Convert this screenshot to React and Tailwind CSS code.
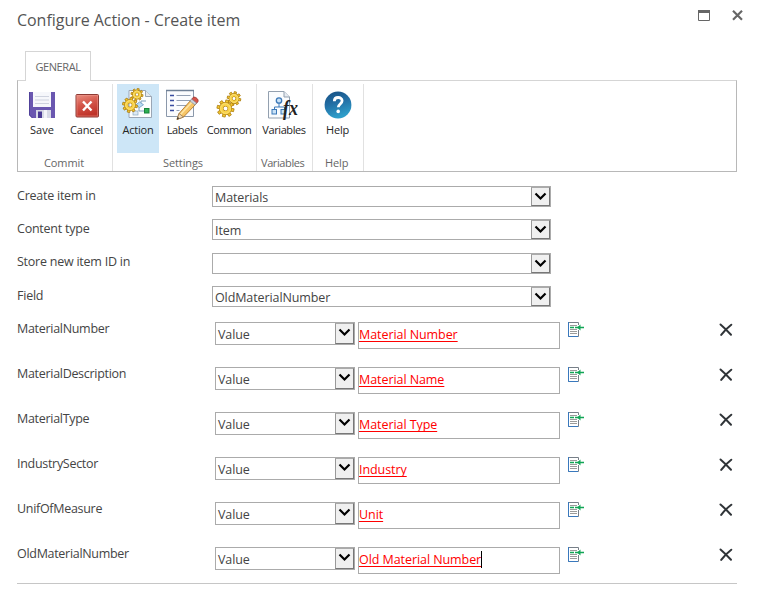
import React from "react";

const GEAR_TEETH = [0, 45, 90, 135, 180, 225, 270, 315];

function Gear({ x, y, r }) {
  return (
    <g transform={`translate(${x} ${y}) rotate(12)`}>
      {GEAR_TEETH.map((a) => (
        <rect key={a} x={-r * 0.17} y={-r} width={r * 0.34} height={r * 0.5} fill="#f5c82e" stroke="#a87709" strokeWidth="0.7" transform={`rotate(${a})`} />
      ))}
      <circle r={r * 0.5} fill="none" stroke="#a87709" strokeWidth={r * 0.4 + 1} />
      <circle r={r * 0.5} fill="none" stroke="#f8d145" strokeWidth={r * 0.4} />
      <circle r={r * 0.57} fill="none" stroke="#fbe58a" strokeWidth="0.6" />
    </g>
  );
}

function SaveIcon() {
  return (
    <svg width="32" height="32" viewBox="0 0 32 32">
      <path d="M3 4h26v26H6l-3-3z" fill="#6a57b0" />
      <path d="M3.500 4v23l3 3" fill="none" stroke="#50419a" strokeWidth="1" />
      <path d="M7 4h18v15H7z" fill="#f6f7fb" />
      <path d="M9 8.500h14M9 12h14M9 15.500h14" stroke="#cfd3df" strokeWidth="1" />
      <path d="M10 22h15v8H10z" fill="#d7d9e6" />
      <path d="M12 23.500h4V30h-4z" fill="#4b3b94" />
      <path d="M18 22h3v8h-3z" fill="#f3f4f9" />
    </svg>
  );
}

function CancelIcon() {
  return (
    <svg width="32" height="32" viewBox="0 0 32 32">
      <defs>
        <linearGradient id="cancelFill" x1="0" y1="0" x2="0.3" y2="1">
          <stop offset="0" stopColor="#ea9284" />
          <stop offset="0.5" stopColor="#d4564a" />
          <stop offset="1" stopColor="#bf3329" />
        </linearGradient>
      </defs>
      <rect x="5" y="6.500" width="22.500" height="22.500" rx="1" fill="url(#cancelFill)" stroke="#8d3a34" />
      <rect x="6" y="7.500" width="20.500" height="20.500" fill="none" stroke="#f09a8e" strokeOpacity="0.5" />
      <path d="M12 13.500l8.500 9M20.500 13.500l-8.500 9" stroke="#fff" strokeWidth="2.400" />
    </svg>
  );
}

function ActionIcon() {
  return (
    <svg width="32" height="32" viewBox="0 0 32 32">
      <path d="M7 2.500h16.500l6 6v21H7z" fill="#fcfdfe" stroke="#9aa6b5" />
      <path d="M23.500 2.500v6h6" fill="#e3e9ef" stroke="#9aa6b5" />
      <path d="M17 18v5h6M19 16v-3h5" fill="none" stroke="#7fa0bd" />
      <path d="M17.500 14l4 2.700-4 2.800-3.500-2.800z" fill="#b9dcf5" stroke="#6d9bc2" strokeWidth="0.8" />
      <rect x="22.500" y="20.500" width="4.500" height="4.500" fill="#2eae53" stroke="#17843a" />
      <rect x="11" y="23" width="5" height="4" fill="#dce9f4" stroke="#8aa8c1" strokeWidth="0.7" />
      <Gear x={15} y={6.5} r={6} />
      <Gear x={8} y={17} r={7.5} />
    </svg>
  );
}

function LabelsIcon() {
  return (
    <svg width="34" height="32" viewBox="0 0 34 32">
      <path d="M1.500 2.500h27v26h-27z" fill="#fbfcfe" stroke="#8b98aa" />
      <path d="M1 2.500h28" stroke="#6f8096" strokeWidth="1.500" />
      <path d="M5 7.500h4M5 12.500h4M5 17.500h4M5 22.500h4" stroke="#3a4da0" strokeWidth="1.500" />
      <path d="M11.500 7.500h14M11.500 12.500h14M11.500 17.500h11M11.500 22.500h3" stroke="#93a0b4" />
      <path d="M12 31.500l2-6L26 12l5 4L18.500 29z" fill="#f7c566" stroke="#a66b1c" strokeWidth="0.8" />
      <path d="M15.500 26.500L27.500 13.500" stroke="#fde5a5" strokeWidth="1.500" />
      <path d="M26.500 11.500l1.500-2c1.500-1.500 6 1.500 5 4l-1.500 2z" fill="#d65349" stroke="#963730" strokeWidth="0.8" />
      <path d="M25 13l5 4 1.500-2-5-4z" fill="#ccd2dc" stroke="#7d8693" strokeWidth="0.6" />
      <path d="M12 31.500l2-6 4.500 3.500z" fill="#f4ddb7" stroke="#8b6a43" strokeWidth="0.7" />
      <path d="M12 31.500l.8-2.500 1.400 1.300z" fill="#222" />
    </svg>
  );
}

function CommonIcon() {
  return (
    <svg width="32" height="32" viewBox="0 0 32 32">
      <Gear x={21} y={10.5} r={6.8} />
      <Gear x={12.5} y={20.5} r={8.5} />
    </svg>
  );
}

function VariablesIcon() {
  return (
    <svg width="32" height="32" viewBox="0 0 32 32">
      <path d="M.5 3.500h15.500l5.500 5.500v21H.5z" fill="#fafcfe" stroke="#93a0af" />
      <path d="M16 3.500V9h5.500" fill="#e5eaf0" stroke="#93a0af" />
      <path d="M11 15v4M6.500 21v-2h10v2" fill="none" stroke="#3b78b8" />
      <circle cx="11" cy="12.500" r="2.700" fill="#c9e2f7" stroke="#3b78b8" strokeWidth="1.300" />
      <rect x="4" y="21.500" width="4.500" height="4.500" fill="#c9e2f7" stroke="#3b78b8" />
      <rect x="13" y="21.500" width="4" height="4.500" fill="#c9e2f7" stroke="#3b78b8" />
      <text x="15" y="27" fontFamily="Liberation Serif, serif" fontStyle="italic" fontWeight="bold" fontSize="20" fill="#222" textLength="15" lengthAdjust="spacingAndGlyphs">fx</text>
    </svg>
  );
}

function HelpIcon() {
  return (
    <svg width="32" height="32" viewBox="0 0 32 32">
      <defs>
        <linearGradient id="helpFill" x1="0" y1="0" x2="0.3" y2="1">
          <stop offset="0" stopColor="#164f82" />
          <stop offset="0.5" stopColor="#236fa5" />
          <stop offset="1" stopColor="#2d9dc9" />
        </linearGradient>
      </defs>
      <circle cx="16" cy="17" r="13.400" fill="url(#helpFill)" />
      <path d="M12.300 13.300c0-5.100 7.800-4.800 7.800-.6 0 3.300-3.800 3.200-3.800 6.600" fill="none" stroke="#fff" strokeWidth="2.800" />
      <circle cx="16.200" cy="23.400" r="1.800" fill="#fff" />
    </svg>
  );
}

function InsertIcon() {
  return (
    <svg width="17" height="16" viewBox="0 0 17 16">
      <path d="M10.500 3V.5H.5v14h10V8" fill="none" stroke="#777f88" />
      <path d="M.5 0v14.500H10" fill="none" stroke="#3978bd" />
      <path d="M2 3.500h7M2 7.500h7M2 9.500h7M2 11.500h7" stroke="#9b9b9b" />
      <path d="M2 5.500h4M7 5.500h9" stroke="#12a556" strokeWidth="1.300" />
      <path d="M9 5.500L12.500 2.500v6z" fill="#12a556" />
    </svg>
  );
}

function DeleteIcon() {
  return (
    <svg width="14" height="14" viewBox="0 0 14 14">
      <path d="M1.500 1.500C5 4.500 8.500 8 12 11.700" stroke="#303438" strokeWidth="2" strokeLinecap="round" fill="none" />
      <path d="M12.300 1.700C8 5 5 8 2.200 11.900" stroke="#303438" strokeWidth="2" strokeLinecap="round" fill="none" />
    </svg>
  );
}

function RibbonButton({ icon, label, width, track = "", active }) {
  return (
    <button className={`${width} flex h-[69px] shrink-0 flex-col items-center pt-1 ${active ? "bg-[#cde6f7]" : ""}`}>
      <span className="flex h-8 items-center justify-center">{icon}</span>
      <span className={`mt-[2px] whitespace-nowrap text-[11px] leading-4 text-[#262626] ${track}`}>{label}</span>
    </button>
  );
}

function RibbonGroup({ title, width, pad, titlePad, children }) {
  return (
    <div className={`${width} flex h-[87px] shrink-0 flex-col border-r border-[#e1e1e1]`}>
      <div className={`flex ${pad}`}>{children}</div>
      <span className={`mt-[2px] whitespace-nowrap text-[11px] leading-4 tracking-[-0.1px] text-[#666] ${titlePad}`}>{title}</span>
    </div>
  );
}

function Select({ value, size, text }) {
  return (
    <div className={`${size} flex shrink-0 border border-[#ababab] bg-white`}>
      <span className={`min-w-0 flex-1 whitespace-nowrap pl-[2px] text-[12.5px] leading-[18px] tracking-[-0.1px] text-[#444] ${text}`}>{value}</span>
      <span className="flex w-[19px] items-start justify-center border border-b-[#777] border-l-[#999] border-r-[#777] border-t-[#aaa] bg-[#f0f0f0] pt-1">
        <svg width="13" height="9" viewBox="0 0 13 9">
          <path d="M1.500 1.500l5 5 5-5" fill="none" stroke="#000" strokeWidth="2.2" />
        </svg>
      </span>
    </div>
  );
}

const TOP_FIELDS = [
  { label: "Create item in", value: "Materials", row: "h-[33px]", shift: "mt-px" },
  { label: "Content type", value: "Item", row: "h-[34px]", shift: "mt-px" },
  { label: "Store new item ID in", value: "", row: "h-[33px]", shift: "" },
  { label: "Field", value: "OldMaterialNumber", row: "h-[36px]", shift: "mt-px" },
];

const MAPPINGS = [
  { field: "MaterialNumber", value: "Material Number" },
  { field: "MaterialDescription", value: "Material Name" },
  { field: "MaterialType", value: "Material Type" },
  { field: "IndustrySector", value: "Industry" },
  { field: "UnifOfMeasure", value: "Unit" },
  { field: "OldMaterialNumber", value: "Old Material Number", focused: true },
];

export default function App() {
  return (
    <div className="flex h-[593px] w-[758px] flex-col overflow-hidden bg-white font-['Open_Sans','Noto_Sans',sans-serif]">
      <header className="flex h-[51px] shrink-0 items-start justify-between pl-[17px] pr-[15px]">
        <h1 className="pt-[9px] text-[16px] leading-[22px] tracking-[-0.04px] text-[#555]">Configure Action - Create item</h1>
        <div className="flex gap-[22px] pt-[10px]">
          <svg width="12" height="11" viewBox="0 0 12 11">
            <path d="M.5.5h11v10H.5z" fill="#fff" stroke="#666" />
            <path d="M0 0h12v3H0z" fill="#666" />
          </svg>
          <svg width="11" height="11" viewBox="0 0 11 11">
            <path d="M1 .8l9 8.900M10 .8L1 9.700" stroke="#666" strokeWidth="2.200" />
          </svg>
        </div>
      </header>

      <div className="ml-[25px] flex h-[30px] w-[66px] shrink-0 items-center justify-center border border-b-0 border-[#d5d5d5] bg-white">
        <span className="text-[11px] leading-4 tracking-[-0.4px] text-[#666]">GENERAL</span>
      </div>
      <div className="relative -mt-px ml-[17px] flex h-[92px] w-[720px] shrink-0 border border-[#b8b8b8] border-t-[#d5d5d5] pt-[3px]">
        <div className="absolute -top-px left-[8px] h-px w-[64px] bg-white" />
        <RibbonGroup title="Commit" width="w-[95px]" pad="pl-[2px]" titlePad="pl-[26px]">
          <RibbonButton icon={<SaveIcon />} label="Save" width="w-[44px]" />
          <RibbonButton icon={<CancelIcon />} label="Cancel" width="w-[45px]" track="tracking-[-0.15px]" />
        </RibbonGroup>
        <RibbonGroup title="Settings" width="w-[144px]" pad="pl-[4px]" titlePad="pl-[50px]">
          <RibbonButton icon={<ActionIcon />} label="Action" width="w-[42px]" track="tracking-[-0.2px]" active />
          <RibbonButton icon={<LabelsIcon />} label="Labels" width="w-[46px]" track="tracking-[-0.35px]" />
          <RibbonButton icon={<CommonIcon />} label="Common" width="w-[48px]" track="tracking-[-0.5px]" />
        </RibbonGroup>
        <RibbonGroup title="Variables" width="w-[56px]" pad="pl-[3px]" titlePad="pl-[4px] tracking-[-0.4px]">
          <RibbonButton icon={<VariablesIcon />} label="Variables" width="w-[48px]" track="tracking-[-0.4px]" />
        </RibbonGroup>
        <RibbonGroup title="Help" width="w-[51px]" pad="pl-[3px]" titlePad="pl-[12px]">
          <RibbonButton icon={<HelpIcon />} label="Help" width="w-[43px]" track="tracking-[-0.2px]" />
        </RibbonGroup>
      </div>

      <main className="ml-[17px] mr-[21px] flex shrink-0 flex-col border-b border-[#c6c6c6] pt-[14px]">
        {TOP_FIELDS.map((f) => (
          <div key={f.label} className={`flex shrink-0 items-start ${f.row}`}>
            <label className={`w-[195px] shrink-0 whitespace-nowrap text-[12.5px] leading-[18px] tracking-[-0.24px] text-[#444] ${f.shift}`}>{f.label}</label>
            <Select value={f.value} size="h-[21px] w-[339px]" text="pt-[2px]" />
          </div>
        ))}
        {MAPPINGS.map((m, i) => (
          <div key={m.field} className={`flex shrink-0 items-start ${i === 5 ? "h-[36px]" : "h-[45px]"}`}>
            <label className="-mt-[2px] w-[198px] shrink-0 whitespace-nowrap text-[12.5px] leading-[18px] tracking-[-0.3px] text-[#444]">{m.field}</label>
            <Select value="Value" size="h-[23px] w-[140px]" text="pt-[3px]" />
            <div className="ml-[3px] flex h-[27px] w-[202px] shrink-0 items-start border border-[#ababab] pt-[3px]">
              <span className="whitespace-nowrap text-[12.5px] leading-[18px] tracking-[-0.07px] text-[#f00] underline decoration-1 underline-offset-2 [text-decoration-skip-ink:none]">{m.value}</span>
              {m.focused && <span className="h-[17px] w-px bg-black" />}
            </div>
            <span className="ml-2"><InsertIcon /></span>
            <span className="ml-auto mr-1 mt-px"><DeleteIcon /></span>
          </div>
        ))}
      </main>
    </div>
  );
}
